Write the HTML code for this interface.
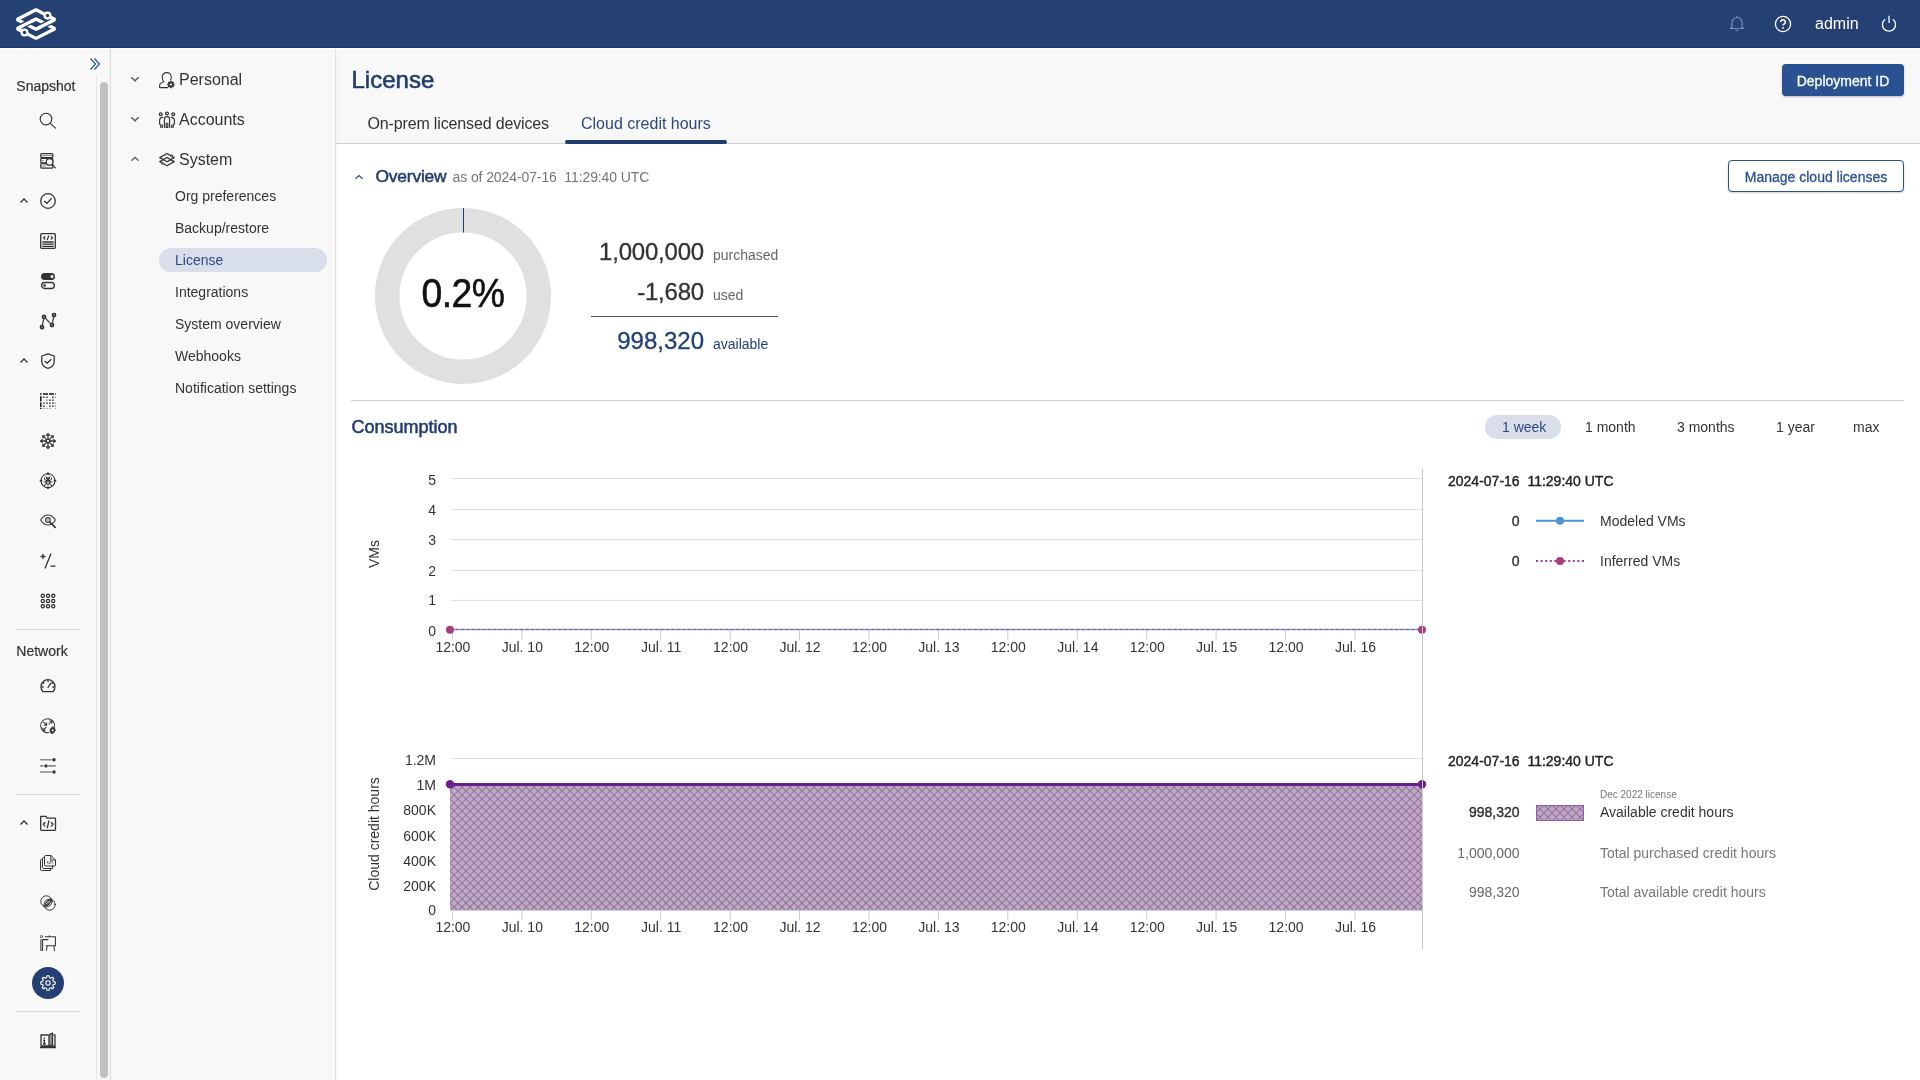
<!DOCTYPE html>
<html><head><meta charset="utf-8">
<style>
*{box-sizing:border-box;margin:0;padding:0}
html,body{width:1920px;height:1080px;overflow:hidden}
body{position:relative;background:#f8f8f8;font-family:"Liberation Sans",sans-serif;color:#333}
.a{position:absolute}
.t{position:absolute;line-height:1;white-space:nowrap}
.m{-webkit-text-stroke:0.35px currentColor}
.r{text-align:right}
#top{left:0;top:0;width:1920px;height:48px;background:#254174;border-bottom:1px solid #1c3563}
#wline{left:0;top:48px;width:1920px;height:1px;background:#fff}
#rail{left:0;top:49px;width:110px;height:1031px;background:#f8f8f8}
#track{left:96px;top:76px;width:14px;height:1004px;border-left:1px solid #e6e6e6}
#thumb{left:100px;top:82px;width:8px;height:996px;border-radius:4px;background:#c1c1c1}
#div1{left:110px;top:49px;width:1px;height:1031px;background:#dedede;box-shadow:-1px 0 2px rgba(0,0,0,0.03)}
#div2{left:335px;top:49px;width:1px;height:1031px;background:#e2e2e2;z-index:2;box-shadow:1px 0 2px rgba(0,0,0,0.04)}
#hdr{left:336px;top:49px;width:1584px;height:95px;background:#f8f8f8;border-bottom:1px solid #cfcfcf}
#main{left:336px;top:144px;width:1584px;height:936px;background:#fff}
.ic{position:absolute;width:16px;height:16px;overflow:visible}
.ic *{fill:none;stroke:#333;stroke-width:1.3;stroke-linecap:round;stroke-linejoin:round}
.navy{color:#1f3b70}
</style></head><body style="will-change:transform">
<div id="top" class="a"></div>
<div id="wline" class="a"></div>
<div id="rail" class="a"></div>
<div id="track" class="a"></div>
<div id="thumb" class="a"></div>
<div id="div1" class="a"></div>
<div id="div2" class="a"></div>
<div id="hdr" class="a"></div>
<div id="main" class="a"></div>

<!-- logo -->
<svg class="a" style="left:0;top:0" width="80" height="48" viewBox="0 0 80 48">
 <g fill="none" stroke="#fff" stroke-width="3.3" stroke-linejoin="bevel">
  <path d="M36 9.8 L55 19.5 L36 29.2 L17 19.5 Z"/>
  <path d="M36 19 L55 28.7 L36 38.4 L17 28.7 Z"/>
 </g>
 <path d="M22 26 L31 21.4" stroke="#254174" stroke-width="6" stroke-linecap="butt"/>
 <path d="M19 27.6 L34 20" stroke="#fff" stroke-width="3.3"/>
 <path d="M50 22 L41 26.6" stroke="#254174" stroke-width="6" stroke-linecap="butt"/>
 <path d="M53 20.5 L38 28.2" stroke="#fff" stroke-width="3.3"/>
 <circle cx="47.5" cy="15.6" r="2.9" fill="#254174" stroke="#fff" stroke-width="2.3"/>
 <circle cx="24.5" cy="32.5" r="2.9" fill="#254174" stroke="#fff" stroke-width="2.3"/>
</svg>

<!-- top right -->
<svg class="a" style="left:1728px;top:14px" width="18" height="19" viewBox="0 0 18 19">
 <path d="M4 13 V8.5 A5 5 0 0 1 14 8.5 V13 L15.5 14.5 H2.5 Z M9 2 V3.5 M7.5 16.5 H10.5" fill="none" stroke="#7f8fae" stroke-width="1.2" stroke-linejoin="round"/>
</svg>
<svg class="a" style="left:1774px;top:15px" width="18" height="18" viewBox="0 0 18 18">
 <circle cx="9" cy="9" r="7.6" fill="none" stroke="#fff" stroke-width="1.3"/>
 <path d="M6.7 7 A2.3 2.3 0 1 1 9.8 9.2 C9.2 9.5 9 9.9 9 10.6" fill="none" stroke="#fff" stroke-width="1.5"/>
 <circle cx="9" cy="12.9" r="0.95" fill="#fff"/>
</svg>
<div class="t" style="left:1815px;top:15.5px;font-size:16px;color:#fff">admin</div>
<svg class="a" style="left:1880px;top:14px" width="18" height="19" viewBox="0 0 18 19">
 <path d="M5.2 5.2 A6.6 6.6 0 1 0 12.8 5.2" fill="none" stroke="#fff" stroke-width="1.3"/>
 <path d="M9 1.8 V9" fill="none" stroke="#fff" stroke-width="1.3"/>
</svg>

<!-- rail -->
<div class="t m" style="left:16.3px;top:78.8px;font-size:14px;color:#333;-webkit-text-stroke:0.2px #333">Snapshot</div>
<svg class="a" style="left:88px;top:56px" width="14" height="16" viewBox="0 0 14 16"><path d="M2.5 2.5 L7.5 8 L2.5 13.5 M6.5 2.5 L11.5 8 L6.5 13.5" fill="none" stroke="#2f5aa0" stroke-width="1.3"/></svg>
<div class="t m" style="left:16.3px;top:643.8px;font-size:14px;color:#333;-webkit-text-stroke:0.2px #333">Network</div>
<div class="a" style="left:16px;top:629px;width:64px;height:1px;background:#d9d9d9"></div>
<div class="a" style="left:16px;top:794px;width:64px;height:1px;background:#d9d9d9"></div>
<div class="a" style="left:16px;top:1011px;width:64px;height:1px;background:#d9d9d9"></div>
<!-- chevrons -->
<svg class="a" style="left:18px;top:195px" width="12" height="12" viewBox="0 0 12 12"><path d="M2.5 7.5 L6 4 L9.5 7.5" fill="none" stroke="#333" stroke-width="1.3"/></svg>
<svg class="a" style="left:18px;top:355px" width="12" height="12" viewBox="0 0 12 12"><path d="M2.5 7.5 L6 4 L9.5 7.5" fill="none" stroke="#333" stroke-width="1.3"/></svg>
<svg class="a" style="left:18px;top:817px" width="12" height="12" viewBox="0 0 12 12"><path d="M2.5 7.5 L6 4 L9.5 7.5" fill="none" stroke="#333" stroke-width="1.3"/></svg>
<!-- 1 search -->
<svg class="ic" style="left:40px;top:113px" viewBox="0 0 16 16"><circle cx="6" cy="6" r="5.8" style="stroke-width:1.15"/><path d="M10.3 10.3 L15.5 15.2" style="stroke-width:1.15"/></svg>
<!-- 2 server search -->
<svg class="ic" style="left:40px;top:153px" viewBox="0 0 16 16"><g style="stroke-width:1.2"><rect x="0.8" y="0.6" width="12" height="4" rx="1"/><rect x="0.8" y="5.3" width="12" height="4.6" rx="1"/><rect x="0.8" y="10.6" width="12" height="4.6" rx="1"/></g><g style="fill:#333;stroke:none"><circle cx="3" cy="2.6" r="0.65" style="fill:#333;stroke:none"/><circle cx="5" cy="2.6" r="0.65" style="fill:#333;stroke:none"/><circle cx="7" cy="2.6" r="0.65" style="fill:#333;stroke:none"/><circle cx="9" cy="2.6" r="0.65" style="fill:#333;stroke:none"/><circle cx="11" cy="2.6" r="0.65" style="fill:#333;stroke:none"/><circle cx="3" cy="7.6" r="0.65" style="fill:#333;stroke:none"/><circle cx="3" cy="12.9" r="0.65" style="fill:#333;stroke:none"/><circle cx="5" cy="12.9" r="0.65" style="fill:#333;stroke:none"/></g><circle cx="9.6" cy="8.9" r="3.3" style="fill:#f8f8f8;stroke-width:1.2"/><path d="M12 11.4 L15.3 14.8" style="stroke-width:1.2"/></svg>
<!-- 3 check circle -->
<svg class="ic" style="left:40px;top:193px" viewBox="0 0 16 16"><circle cx="8" cy="8" r="7.3"/><path d="M4.5 8.3 L7 10.3 L11.3 5.6"/></svg>
<!-- 4 code doc -->
<svg class="ic" style="left:40px;top:233px" viewBox="0 0 16 16"><rect x="0.7" y="0.7" width="14.6" height="14.6" rx="1"/><path d="M4.8 3.6 L3.6 4.8 L4.8 6 M11.2 3.6 L12.4 4.8 L11.2 6 M8.6 3 L7.4 6.6 M2.8 9 H13.2 M2.8 11.2 H13.2 M2.8 13.3 H13.2"/></svg>
<!-- 5 toggles -->
<svg class="ic" style="left:40px;top:273px" viewBox="0 0 16 16"><rect x="1" y="0" width="14" height="7" rx="3.5" style="fill:#333;stroke:none"/><circle cx="12" cy="3.5" r="1.5" style="fill:#f8f8f8;stroke:none"/><rect x="1.6" y="9.5" width="12.8" height="6" rx="3"/><circle cx="4.6" cy="12.5" r="1.3" style="fill:#333;stroke:none"/></svg>
<!-- 6 graph -->
<svg class="ic" style="left:40px;top:313px" viewBox="0 0 16 16"><path d="M2 14.2 L4 3.8 L12 12.1 L14 2" style="stroke:#444"/><circle cx="2" cy="14.2" r="1.7" style="fill:#777"/><circle cx="4" cy="3.8" r="1.7" style="fill:#777"/><circle cx="12" cy="12.1" r="1.7" style="fill:#777"/><circle cx="14" cy="2" r="1.7" style="fill:#777"/></svg>
<!-- 7 shield -->
<svg class="ic" style="left:40px;top:353px" viewBox="0 0 16 16"><path d="M8 0.8 L14.2 3 V8.5 C14.2 12 11 14.5 8 15.4 C5 14.5 1.8 12 1.8 8.5 V3 Z"/><path d="M5 8.5 L7.2 10.3 L11 6.5"/></svg>
<!-- 8 dotted grid -->
<svg class="ic" style="left:40px;top:393px" viewBox="0 0 16 16"><rect x="0" y="0.2" width="1.5" height="1.6" style="fill:#222;stroke:none"/><rect x="3" y="0.2" width="5" height="1.6" style="fill:#222;stroke:none"/><rect x="9" y="0.2" width="5" height="1.6" style="fill:#222;stroke:none"/><rect x="15" y="0.2" width="1" height="1.6" style="fill:#444;stroke:none"/><rect x="0" y="3" width="1.6" height="5.5" rx="0.6" style="fill:#222;stroke:none"/><rect x="0" y="9.3" width="1.6" height="5" rx="0.6" style="fill:#222;stroke:none"/><rect x="0" y="15" width="1.6" height="1" style="fill:#222;stroke:none"/><rect x="3.15" y="3.55" width="1.5" height="1.5" style="fill:#333;stroke:none"/><rect x="6.15" y="3.55" width="1.5" height="1.5" style="fill:#333;stroke:none"/><rect x="12.15" y="3.55" width="1.5" height="1.5" style="fill:#333;stroke:none"/><rect x="14.75" y="3.55" width="1" height="1.5" style="fill:#888;stroke:none"/><rect x="6.15" y="6.45" width="1.5" height="1.5" style="fill:#888;stroke:none"/><rect x="9.15" y="6.45" width="1.5" height="1.5" style="fill:#333;stroke:none"/><rect x="12.15" y="6.45" width="1.5" height="1.5" style="fill:#333;stroke:none"/><rect x="3.15" y="9.45" width="1.5" height="1.5" style="fill:#333;stroke:none"/><rect x="6.15" y="9.45" width="1.5" height="1.5" style="fill:#333;stroke:none"/><rect x="9.15" y="9.45" width="1.5" height="1.5" style="fill:#333;stroke:none"/><rect x="12.15" y="9.45" width="1.5" height="1.5" style="fill:#333;stroke:none"/><rect x="14.75" y="9.45" width="1" height="1.5" style="fill:#888;stroke:none"/><rect x="3.15" y="12.35" width="1.5" height="1.5" style="fill:#333;stroke:none"/><rect x="9.15" y="12.35" width="1.5" height="1.5" style="fill:#333;stroke:none"/><rect x="12.15" y="12.35" width="1.5" height="1.5" style="fill:#333;stroke:none"/><rect x="14.75" y="12.35" width="1" height="1.5" style="fill:#888;stroke:none"/><rect x="3.15" y="14.85" width="1.5" height="1.0" style="fill:#888;stroke:none"/><rect x="6.15" y="14.85" width="1.5" height="1.0" style="fill:#888;stroke:none"/><rect x="9.15" y="14.85" width="1.5" height="1.0" style="fill:#888;stroke:none"/><rect x="14.75" y="14.85" width="1" height="1.0" style="fill:#888;stroke:none"/></svg>
<!-- 9 hub -->
<svg class="ic" style="left:40px;top:433px" viewBox="0 0 16 16"><circle cx="8" cy="8" r="1.8"/><path d="M8 0.8 V6 M8 10 V15.2 M0.8 8 H6 M10 8 H15.2 M2.9 2.9 L6.6 6.6 M9.4 9.4 L13.1 13.1 M13.1 2.9 L9.4 6.6 M6.6 9.4 L2.9 13.1"/><path d="M6.6 2.2 L8 0.8 L9.4 2.2 M6.6 13.8 L8 15.2 L9.4 13.8 M2.2 6.6 L0.8 8 L2.2 9.4 M13.8 6.6 L15.2 8 L13.8 9.4 M2.9 4.8 V2.9 H4.8 M11.2 2.9 H13.1 V4.8 M13.1 11.2 V13.1 H11.2 M4.8 13.1 H2.9 V11.2"/></svg>
<!-- 10 bug circle -->
<svg class="ic" style="left:40px;top:473px" viewBox="0 0 16 16"><circle cx="8" cy="7.7" r="7" style="stroke-width:1.05"/><path d="M8 0.2 V1.2 M8 14.2 V15.2 M0.5 7.7 H1.5 M14.5 7.7 H15.5" style="stroke-width:1.8"/><ellipse cx="8" cy="9" rx="1.9" ry="2.6" style="fill:#333;stroke-width:1"/><path d="M6.6 5.6 A1.5 1.5 0 0 1 9.4 5.6 Z" style="fill:#333;stroke-width:1"/><path d="M6 7.3 L4.5 6.3 L4.5 5 M10 7.3 L11.5 6.3 L11.5 5 M5.9 9 H4 M10.1 9 H12 M6.2 10.8 L4.6 11.8 V12.8 M9.8 10.8 L11.4 11.8 V12.8 M6.7 4.7 L6 3.5 M9.3 4.7 L10 3.5" style="stroke-width:1"/><ellipse cx="8" cy="9.6" rx="0.8" ry="1.3" style="fill:#f8f8f8;stroke:none"/></svg>
<!-- 11 eye search -->
<svg class="ic" style="left:40px;top:513px" viewBox="0 0 16 16"><path d="M0.6 7 C3 3.2 5.5 2 8 2 C10.5 2 13 3.2 15.4 7 C13 10.8 10.5 12 8 12 C5.5 12 3 10.8 0.6 7 Z" style="stroke-width:1.05"/><circle cx="7.9" cy="7" r="2.4" style="fill:#f8f8f8;stroke-width:1.1"/><circle cx="7.9" cy="7" r="1" style="fill:#999;stroke:none"/><path d="M9.7 9 L15.2 14.3" style="stroke-width:1.7"/></svg>
<!-- 12 +/- -->
<svg class="ic" style="left:40px;top:553px" viewBox="0 0 16 16"><path d="M10.8 1 L5.2 15 M1 3.5 H5 M3 1.5 V5.5 M11 13.2 H15"/></svg>
<!-- 13 3x3 -->
<svg class="ic" style="left:40px;top:593px" viewBox="0 0 16 16"><g style="stroke-width:1.4"><circle cx="2.8" cy="2.8" r="1.6"/><circle cx="8" cy="2.8" r="1.6"/><circle cx="13.2" cy="2.8" r="1.6"/><circle cx="2.8" cy="8" r="1.6"/><circle cx="8" cy="8" r="1.6"/><circle cx="13.2" cy="8" r="1.6"/><circle cx="2.8" cy="13.2" r="1.6"/><circle cx="8" cy="13.2" r="1.6"/><circle cx="13.2" cy="13.2" r="1.6"/></g></svg>
<!-- 14 speedometer -->
<svg class="ic" style="left:40px;top:678px" viewBox="0 0 16 16"><path d="M3 13.6 A7 7 0 1 1 13 13.6 Z"/><path d="M8 9.5 L10.8 5.2 M8 2.3 V3.5 M3 4.5 L3.8 5.3 M13 4.5 L12.2 5.3 M2 9 H3.2 M12.8 9 H14"/></svg>
<!-- 15 gauge gear -->
<svg class="ic" style="left:40px;top:718px" viewBox="0 0 16 16"><path d="M8.8 14.6 A7 7 0 1 1 14.6 8.2" style="stroke-width:1.05"/><path d="M3.6 4.2 L6.6 7.2 M6.6 7.2 V5 M6.6 7.2 H4.4 M9 6 L12 3 M12 3 V5.2 M12 3 H9.8 M6 9.3 L3 12.3 M3 12.3 V10.1 M3 12.3 H5.2" style="stroke-width:1.05"/><path d="M12.6 8.6 L13.5 8.6 L13.8 9.6 L14.8 9.2 L15.4 9.9 L14.8 10.8 L15.6 11.6 L16 12.6 L15 13 L15 14 L14.2 14.6 L13.6 15.6 L12.6 15.4 L11.6 16 L10.8 15.2 L10 14.6 L10.2 13.6 L9.4 12.8 L9.8 11.8 L9.8 10.8 L10.8 10.3 L11.4 9.4 Z" style="fill:#333;stroke:none"/><circle cx="12.7" cy="12.3" r="1.1" style="fill:#f8f8f8;stroke:none"/></svg>
<!-- 16 sliders -->
<svg class="ic" style="left:40px;top:758px" viewBox="0 0 16 16"><path d="M0.8 1.7 H11.5 M0.8 7.9 H2.8 M8.8 7.9 H15.2 M0.8 14 H11.5" style="stroke:#888;stroke-width:1.6"/><circle cx="14" cy="1.7" r="1.7" style="fill:#333;stroke:none"/><circle cx="6" cy="7.9" r="1.7" style="fill:#333;stroke:none"/><circle cx="14" cy="14" r="1.7" style="fill:#333;stroke:none"/></svg>
<!-- 17 folder code -->
<svg class="ic" style="left:40px;top:815px" viewBox="0 0 16 16"><path d="M0.7 1.3 V14.5 A0.8 0.8 0 0 0 1.5 15.3 H14.7 A0.8 0.8 0 0 0 15.5 14.5 V3.9 A0.8 0.8 0 0 0 14.7 3.1 H7 L6 1.3 Z"/><path d="M5 7.5 L3.3 9.3 L5 11.1 M11.3 7.5 L13 9.3 L11.3 11.1 M8.8 6 L7.4 12.7"/></svg>
<!-- 18 files code -->
<svg class="ic" style="left:40px;top:855px" viewBox="0 0 16 16"><path d="M4.5 1.5 A1 1 0 0 1 5.5 0.5 H10.8 L15.5 5 V10 A1 1 0 0 1 14.5 11 H5.5 A1 1 0 0 1 4.5 10 Z M10.8 0.5 V5 H15.5" style="stroke-width:1"/><path d="M4.5 2.5 H3.5 A1 1 0 0 0 2.5 3.5 V12.5 A1 1 0 0 0 3.5 13.5 H12.5 V11" style="stroke-width:1"/><path d="M2.5 4.5 H1.5 A1 1 0 0 0 0.5 5.5 V14.5 A1 1 0 0 0 1.5 15.5 H10.5 V13.5" style="stroke-width:1"/><path d="M8 6.3 L7.2 7.3 L8 8.3 M12 6.3 L12.8 7.3 L12 8.3 M10.4 5.9 L9.6 8.8" style="stroke-width:0.9"/></svg>
<!-- 19 overlapping circles -->
<svg class="ic" style="left:40px;top:895px" viewBox="0 0 16 16"><circle cx="6.4" cy="6.4" r="5.6" style="stroke-width:1"/><circle cx="9.6" cy="9.6" r="5.6" style="stroke-width:1"/><path d="M4.3 11.2 C6 7 7 6 11.2 4.3 C10.5 8.6 8.6 10.5 4.3 11.2 Z" style="stroke-width:1.2"/><path d="M6.3 7.3 L8.6 9.3 M7.5 6.2 L9.6 8.1 M5.6 8.8 L7.4 10.2" style="stroke-width:1"/></svg>
<!-- 20 presentation -->
<svg class="ic" style="left:40px;top:935px" viewBox="0 0 16 16"><circle cx="1.5" cy="1.6" r="1.1" style="stroke-width:0.9"/><path d="M0.9 4.6 V15.5 M2.6 4.6 V15.5 M2.6 4.6 H8 M5.4 1.8 H15.4 V10.8 H6.2 M7.2 10.8 L6.4 15.5 M13.8 10.8 L14.6 15.5" style="stroke-width:1.05"/><path d="M9.5 0.8 V1.8" style="stroke-width:1"/></svg>
<!-- 21 settings dark -->
<div class="a" style="left:32px;top:967px;width:32px;height:32px;border-radius:16px;background:#243f72"></div>
<svg class="a" style="left:40px;top:975px" width="16" height="16" viewBox="0 0 16 16"><path d="M6.9 0.8 H9.1 L9.5 2.7 L10.9 3.3 L12.5 2.2 L13.8 3.5 L12.7 5.1 L13.3 6.5 L15.2 6.9 V9.1 L13.3 9.5 L12.7 10.9 L13.8 12.5 L12.5 13.8 L10.9 12.7 L9.5 13.3 L9.1 15.2 H6.9 L6.5 13.3 L5.1 12.7 L3.5 13.8 L2.2 12.5 L3.3 10.9 L2.7 9.5 L0.8 9.1 V6.9 L2.7 6.5 L3.3 5.1 L2.2 3.5 L3.5 2.2 L5.1 3.3 L6.5 2.7 Z" fill="none" stroke="#fff" stroke-width="1.1" stroke-linejoin="round"/><circle cx="8" cy="8" r="2.2" fill="none" stroke="#fff" stroke-width="1.1"/></svg>
<!-- 22 book info -->
<svg class="ic" style="left:40px;top:1032px" viewBox="0 0 16 16"><path d="M8 3 H1 V14 H15 V3 H14 M0.5 15.5 H15.5"/><path d="M9 14 V2.8 L12.5 1 V12.5 L9 14" style="fill:#999;stroke:#333"/><path d="M4.2 6 V6.2 M3.6 8.3 H4.4 V12 M3.4 12 H5.3" style="stroke-width:1.4"/></svg>

<!-- secondary nav -->
<svg class="a" style="left:129px;top:73px" width="12" height="12" viewBox="0 0 12 12"><path d="M2.3 4.3 L6 7.8 L9.7 4.3" fill="none" stroke="#555" stroke-width="1.2"/></svg>
<svg class="a" style="left:129px;top:113px" width="12" height="12" viewBox="0 0 12 12"><path d="M2.3 4.3 L6 7.8 L9.7 4.3" fill="none" stroke="#555" stroke-width="1.2"/></svg>
<svg class="a" style="left:129px;top:153px" width="12" height="12" viewBox="0 0 12 12"><path d="M2.3 7.8 L6 4.3 L9.7 7.8" fill="none" stroke="#555" stroke-width="1.2"/></svg>
<svg class="ic" style="left:159px;top:72px" viewBox="0 0 16 16"><path d="M0.6 15.6 V14 C0.6 11.8 2.2 10.4 5 9.8 C3.8 8.8 3.3 7.4 3.3 5.6 C3.3 2.6 5.2 0.6 7.8 0.6 C10.4 0.6 12.3 2.6 12.3 5.2 C12.3 6.2 12 7.2 11.6 7.8 M0.6 15.6 H8.6" style="stroke-width:1.1"/><path d="M11.2 8.8 H12.6 L12.9 10 L14.1 9.4 L15 10.3 L14.4 11.5 L15.6 11.8 V13.2 L14.4 13.5 L15 14.7 L14.1 15.6 L12.9 15 L12.6 16.2 H11.2 L10.9 15 L9.7 15.6 L8.8 14.7 L9.4 13.5 L8.2 13.2 V11.8 L9.4 11.5 L8.8 10.3 L9.7 9.4 L10.9 10 Z" style="fill:#333;stroke:none"/><circle cx="11.9" cy="12.5" r="1.1" style="fill:#f8f8f8;stroke:none"/></svg>
<svg class="ic" style="left:159px;top:112px" viewBox="0 0 16 16"><g style="fill:#888;stroke-width:0.9"><circle cx="1.8" cy="2.3" r="1.4"/><circle cx="8" cy="1.5" r="1.4"/><circle cx="14.2" cy="2.3" r="1.4"/></g><path d="M5.4 15.5 V7.5 C5.4 5.6 6.4 4.6 8 4.6 C9.6 4.6 10.6 5.6 10.6 7.5 V15.5 M7.2 15.5 V11 M8.8 15.5 V11 M7.2 15.5 H8.8" style="stroke-width:1.15"/><path d="M3.8 5.4 C1.8 5.4 0.6 6.6 0.6 8.6 V12 L1.8 12.8 V15.5 M3.3 13 V15.5 M12.2 5.4 C14.2 5.4 15.4 6.6 15.4 8.6 V12 L14.2 12.8 V15.5 M12.7 13 V15.5" style="stroke-width:1.15"/></svg>
<svg class="ic" style="left:159px;top:152px" viewBox="0 0 16 16"><g style="stroke-width:1.2"><path d="M8 1.5 L15.2 5.6 L8 9.7 L0.8 5.6 Z"/><path d="M8 5.5 L15.2 9.6 L8 13.7 L0.8 9.6 Z"/></g><circle cx="12.6" cy="3.9" r="1" style="fill:#f8f8f8;stroke-width:1"/><circle cx="3.4" cy="11.3" r="1" style="fill:#f8f8f8;stroke-width:1"/></svg>
<div class="t" style="left:179px;top:71.5px;font-size:16px;color:#333">Personal</div>
<div class="t" style="left:179px;top:111.5px;font-size:16px;color:#333">Accounts</div>
<div class="t" style="left:179px;top:151.5px;font-size:16px;color:#333">System</div>
<div class="a" style="left:159px;top:248px;width:168px;height:24px;border-radius:12px;background:#d8dfea"></div>
<div class="t" style="left:175px;top:189px;font-size:14px;color:#333">Org preferences</div>
<div class="t" style="left:175px;top:221px;font-size:14px;color:#333">Backup/restore</div>
<div class="t" style="left:175px;top:253px;font-size:14px;color:#2b4a82">License</div>
<div class="t" style="left:175px;top:285px;font-size:14px;color:#333">Integrations</div>
<div class="t" style="left:175px;top:317px;font-size:14px;color:#333">System overview</div>
<div class="t" style="left:175px;top:349px;font-size:14px;color:#333">Webhooks</div>
<div class="t" style="left:175px;top:381px;font-size:14px;color:#333">Notification settings</div>

<!-- page header -->
<div class="t" style="left:351.5px;top:67.8px;font-size:24px;color:#1f3b70;-webkit-text-stroke:0.55px #1f3b70">License</div>
<div class="a" style="left:1782px;top:64px;width:122px;height:32px;border-radius:4px;background:#2a5192;box-shadow:0 1px 2px rgba(0,0,0,.25)"></div>
<div class="t m" style="left:1782px;top:74px;width:122px;text-align:center;font-size:14px;color:#fff;-webkit-text-stroke:0.3px #fff">Deployment ID</div>
<div class="t" style="left:367.5px;top:116.3px;font-size:16px;color:#333;letter-spacing:-0.15px">On-prem licensed devices</div>
<div class="t" style="left:581px;top:116.3px;font-size:16px;color:#2b4a82">Cloud credit hours</div>
<div class="a" style="left:565px;top:140px;width:162px;height:4px;border-radius:2px;background:#1f3b70"></div>

<!-- overview -->
<svg class="a" style="left:352px;top:170px" width="14" height="14" viewBox="0 0 14 14"><path d="M3.5 8.7 L7 5.5 L10.5 8.7" fill="none" stroke="#2b4a82" stroke-width="1.2"/></svg>
<div class="t" style="left:375.5px;top:168px;font-size:17.4px;color:#1f3b70;-webkit-text-stroke:0.5px #1f3b70;letter-spacing:-0.2px">Overview</div>
<div class="t" style="left:452.5px;top:169.6px;font-size:14px;color:#757575;letter-spacing:-0.1px">as of 2024-07-16&nbsp; 11:29:40 UTC</div>
<div class="a" style="left:1728px;top:160px;width:176px;height:32px;border-radius:4px;background:#fff;border:1px solid #2a5192;box-shadow:0 1px 2px rgba(0,0,0,.2)"></div>
<div class="t m" style="left:1728px;top:170px;width:176px;text-align:center;font-size:14px;color:#2a5192;-webkit-text-stroke:0.3px #2a5192">Manage cloud licenses</div>
<svg class="a" style="left:370px;top:203px" width="186" height="186" viewBox="0 0 186 186">
 <circle cx="93" cy="93" r="75.8" fill="none" stroke="#e0e0e0" stroke-width="24.5"/>
 <path d="M93.5 5 V29.5" stroke="#1f3b70" stroke-width="1"/>
</svg>
<div class="t" style="left:413px;top:273px;width:100px;text-align:center;font-size:40px;color:#111;letter-spacing:-0.6px;transform:scaleX(0.935);-webkit-text-stroke:0.55px #111">0.2%</div>
<div class="t r" style="left:504px;top:239.5px;width:200px;font-size:24px;color:#333;letter-spacing:-0.2px;-webkit-text-stroke:0.3px #333">1,000,000</div>
<div class="t" style="left:713px;top:248px;font-size:14px;color:#666">purchased</div>
<div class="t r" style="left:504px;top:279.5px;width:200px;font-size:24px;color:#333;letter-spacing:-0.2px;-webkit-text-stroke:0.3px #333">-1,680</div>
<div class="t" style="left:713px;top:288px;font-size:14px;color:#666">used</div>
<div class="a" style="left:591px;top:316px;width:187px;height:1px;background:#555"></div>
<div class="t r" style="left:504px;top:328.5px;width:200px;font-size:24px;color:#1f3f7a;letter-spacing:0px;-webkit-text-stroke:0.3px #1f3f7a">998,320</div>
<div class="t" style="left:713px;top:337px;font-size:14px;color:#1f3f7a">available</div>
<div class="a" style="left:351px;top:400px;width:1553px;height:1px;background:#d0d0d0"></div>
<div class="t" style="left:351.5px;top:417.6px;font-size:18px;color:#1f3b70;-webkit-text-stroke:0.5px #1f3b70">Consumption</div>
<div class="a" style="left:1485px;top:415px;width:76px;height:24px;border-radius:12px;background:#d8dfea"></div>
<div class="t" style="left:1502px;top:420px;font-size:14px;color:#2b4a82">1 week</div>
<div class="t" style="left:1585px;top:420px;font-size:14px;color:#333">1 month</div>
<div class="t" style="left:1677px;top:420px;font-size:14px;color:#333">3 months</div>
<div class="t" style="left:1776px;top:420px;font-size:14px;color:#333">1 year</div>
<div class="t" style="left:1853px;top:420px;font-size:14px;color:#333">max</div>

<!-- charts -->
<svg class="a" style="left:0;top:0" width="1920" height="1080" viewBox="0 0 1920 1080" font-family="Liberation Sans, sans-serif">
<defs><clipPath id="c1"><rect x="450" y="785" width="972" height="125"/></clipPath><clipPath id="c2"><rect x="1537" y="806" width="46" height="14"/></clipPath></defs>
<path d="M451 478.5 H1422" stroke="#dcdcdc" stroke-width="1"/>
<path d="M451 509.4 H1422" stroke="#dcdcdc" stroke-width="1"/>
<path d="M451 539.6 H1422" stroke="#dcdcdc" stroke-width="1"/>
<path d="M451 570.6 H1422" stroke="#dcdcdc" stroke-width="1"/>
<path d="M451 600.4 H1422" stroke="#dcdcdc" stroke-width="1"/>
<text x="436" y="485" font-size="14" fill="#333" text-anchor="end">5</text>
<text x="436" y="514.6" font-size="14" fill="#333" text-anchor="end">4</text>
<text x="436" y="544.6" font-size="14" fill="#333" text-anchor="end">3</text>
<text x="436" y="575.7" font-size="14" fill="#333" text-anchor="end">2</text>
<text x="436" y="605.4" font-size="14" fill="#333" text-anchor="end">1</text>
<text x="436" y="635.6" font-size="14" fill="#333" text-anchor="end">0</text>
<path d="M452.4 630 V640" stroke="#c5cbeb" stroke-width="1"/>
<text x="452.9" y="651.9" font-size="14" fill="#333" text-anchor="middle">12:00</text>
<path d="M521.8 630 V640" stroke="#c5cbeb" stroke-width="1"/>
<text x="522.3" y="651.9" font-size="14" fill="#333" text-anchor="middle">Jul. 10</text>
<path d="M591.3 630 V640" stroke="#c5cbeb" stroke-width="1"/>
<text x="591.8" y="651.9" font-size="14" fill="#333" text-anchor="middle">12:00</text>
<path d="M660.7 630 V640" stroke="#c5cbeb" stroke-width="1"/>
<text x="661.2" y="651.9" font-size="14" fill="#333" text-anchor="middle">Jul. 11</text>
<path d="M730.1 630 V640" stroke="#c5cbeb" stroke-width="1"/>
<text x="730.6" y="651.9" font-size="14" fill="#333" text-anchor="middle">12:00</text>
<path d="M799.5 630 V640" stroke="#c5cbeb" stroke-width="1"/>
<text x="800.0" y="651.9" font-size="14" fill="#333" text-anchor="middle">Jul. 12</text>
<path d="M869.0 630 V640" stroke="#c5cbeb" stroke-width="1"/>
<text x="869.5" y="651.9" font-size="14" fill="#333" text-anchor="middle">12:00</text>
<path d="M938.4 630 V640" stroke="#c5cbeb" stroke-width="1"/>
<text x="938.9" y="651.9" font-size="14" fill="#333" text-anchor="middle">Jul. 13</text>
<path d="M1007.8 630 V640" stroke="#c5cbeb" stroke-width="1"/>
<text x="1008.3" y="651.9" font-size="14" fill="#333" text-anchor="middle">12:00</text>
<path d="M1077.3 630 V640" stroke="#c5cbeb" stroke-width="1"/>
<text x="1077.8" y="651.9" font-size="14" fill="#333" text-anchor="middle">Jul. 14</text>
<path d="M1146.7 630 V640" stroke="#c5cbeb" stroke-width="1"/>
<text x="1147.2" y="651.9" font-size="14" fill="#333" text-anchor="middle">12:00</text>
<path d="M1216.1 630 V640" stroke="#c5cbeb" stroke-width="1"/>
<text x="1216.6" y="651.9" font-size="14" fill="#333" text-anchor="middle">Jul. 15</text>
<path d="M1285.6 630 V640" stroke="#c5cbeb" stroke-width="1"/>
<text x="1286.1" y="651.9" font-size="14" fill="#333" text-anchor="middle">12:00</text>
<path d="M1355.0 630 V640" stroke="#c5cbeb" stroke-width="1"/>
<text x="1355.5" y="651.9" font-size="14" fill="#333" text-anchor="middle">Jul. 16</text>
<path d="M450 629.5 H1422" stroke="#6aa6dc" stroke-width="1.6"/>
<path d="M450 629.5 H1422" stroke="#b03f84" stroke-width="1.1" stroke-dasharray="3 2.4"/>
<circle cx="450" cy="629.7" r="4" fill="#a63d7f"/>
<circle cx="1422" cy="629.7" r="4" fill="#a63d7f"/>
<text transform="translate(378.5 554) rotate(-90)" font-size="14" fill="#333" text-anchor="middle">VMs</text>
<path d="M451 758.6 H1422" stroke="#dcdcdc" stroke-width="1"/>
<path d="M451 784 H1422" stroke="#dcdcdc" stroke-width="1"/>
<path d="M451 809.4 H1422" stroke="#dcdcdc" stroke-width="1"/>
<path d="M451 835.2 H1422" stroke="#dcdcdc" stroke-width="1"/>
<path d="M451 860.3 H1422" stroke="#dcdcdc" stroke-width="1"/>
<path d="M451 885.6 H1422" stroke="#dcdcdc" stroke-width="1"/>
<rect x="450" y="784" width="972" height="126" fill="#c3a6d7"/>
<path d="M450 809.4 H1422" stroke="#b99dd0" stroke-width="1"/>
<path d="M450 835.2 H1422" stroke="#b99dd0" stroke-width="1"/>
<path d="M450 860.3 H1422" stroke="#b99dd0" stroke-width="1"/>
<path d="M450 885.6 H1422" stroke="#b99dd0" stroke-width="1"/>
<path clip-path="url(#c1)" d="M323 784L449 910M331 784L457 910M339 784L465 910M347 784L473 910M355 784L481 910M363 784L489 910M371 784L497 910M379 784L505 910M387 784L513 910M395 784L521 910M403 784L529 910M411 784L537 910M419 784L545 910M427 784L553 910M435 784L561 910M443 784L569 910M451 784L577 910M459 784L585 910M467 784L593 910M475 784L601 910M483 784L609 910M491 784L617 910M499 784L625 910M507 784L633 910M515 784L641 910M523 784L649 910M531 784L657 910M539 784L665 910M547 784L673 910M555 784L681 910M563 784L689 910M571 784L697 910M579 784L705 910M587 784L713 910M595 784L721 910M603 784L729 910M611 784L737 910M619 784L745 910M627 784L753 910M635 784L761 910M643 784L769 910M651 784L777 910M659 784L785 910M667 784L793 910M675 784L801 910M683 784L809 910M691 784L817 910M699 784L825 910M707 784L833 910M715 784L841 910M723 784L849 910M731 784L857 910M739 784L865 910M747 784L873 910M755 784L881 910M763 784L889 910M771 784L897 910M779 784L905 910M787 784L913 910M795 784L921 910M803 784L929 910M811 784L937 910M819 784L945 910M827 784L953 910M835 784L961 910M843 784L969 910M851 784L977 910M859 784L985 910M867 784L993 910M875 784L1001 910M883 784L1009 910M891 784L1017 910M899 784L1025 910M907 784L1033 910M915 784L1041 910M923 784L1049 910M931 784L1057 910M939 784L1065 910M947 784L1073 910M955 784L1081 910M963 784L1089 910M971 784L1097 910M979 784L1105 910M987 784L1113 910M995 784L1121 910M1003 784L1129 910M1011 784L1137 910M1019 784L1145 910M1027 784L1153 910M1035 784L1161 910M1043 784L1169 910M1051 784L1177 910M1059 784L1185 910M1067 784L1193 910M1075 784L1201 910M1083 784L1209 910M1091 784L1217 910M1099 784L1225 910M1107 784L1233 910M1115 784L1241 910M1123 784L1249 910M1131 784L1257 910M1139 784L1265 910M1147 784L1273 910M1155 784L1281 910M1163 784L1289 910M1171 784L1297 910M1179 784L1305 910M1187 784L1313 910M1195 784L1321 910M1203 784L1329 910M1211 784L1337 910M1219 784L1345 910M1227 784L1353 910M1235 784L1361 910M1243 784L1369 910M1251 784L1377 910M1259 784L1385 910M1267 784L1393 910M1275 784L1401 910M1283 784L1409 910M1291 784L1417 910M1299 784L1425 910M1307 784L1433 910M1315 784L1441 910M1323 784L1449 910M1331 784L1457 910M1339 784L1465 910M1347 784L1473 910M1355 784L1481 910M1363 784L1489 910M1371 784L1497 910M1379 784L1505 910M1387 784L1513 910M1395 784L1521 910M1403 784L1529 910M1411 784L1537 910M1419 784L1545 910M1427 784L1553 910" stroke="#8d7c7e" stroke-width="1.1" fill="none"/>
<path clip-path="url(#c1)" d="M449 784L323 910M457 784L331 910M465 784L339 910M473 784L347 910M481 784L355 910M489 784L363 910M497 784L371 910M505 784L379 910M513 784L387 910M521 784L395 910M529 784L403 910M537 784L411 910M545 784L419 910M553 784L427 910M561 784L435 910M569 784L443 910M577 784L451 910M585 784L459 910M593 784L467 910M601 784L475 910M609 784L483 910M617 784L491 910M625 784L499 910M633 784L507 910M641 784L515 910M649 784L523 910M657 784L531 910M665 784L539 910M673 784L547 910M681 784L555 910M689 784L563 910M697 784L571 910M705 784L579 910M713 784L587 910M721 784L595 910M729 784L603 910M737 784L611 910M745 784L619 910M753 784L627 910M761 784L635 910M769 784L643 910M777 784L651 910M785 784L659 910M793 784L667 910M801 784L675 910M809 784L683 910M817 784L691 910M825 784L699 910M833 784L707 910M841 784L715 910M849 784L723 910M857 784L731 910M865 784L739 910M873 784L747 910M881 784L755 910M889 784L763 910M897 784L771 910M905 784L779 910M913 784L787 910M921 784L795 910M929 784L803 910M937 784L811 910M945 784L819 910M953 784L827 910M961 784L835 910M969 784L843 910M977 784L851 910M985 784L859 910M993 784L867 910M1001 784L875 910M1009 784L883 910M1017 784L891 910M1025 784L899 910M1033 784L907 910M1041 784L915 910M1049 784L923 910M1057 784L931 910M1065 784L939 910M1073 784L947 910M1081 784L955 910M1089 784L963 910M1097 784L971 910M1105 784L979 910M1113 784L987 910M1121 784L995 910M1129 784L1003 910M1137 784L1011 910M1145 784L1019 910M1153 784L1027 910M1161 784L1035 910M1169 784L1043 910M1177 784L1051 910M1185 784L1059 910M1193 784L1067 910M1201 784L1075 910M1209 784L1083 910M1217 784L1091 910M1225 784L1099 910M1233 784L1107 910M1241 784L1115 910M1249 784L1123 910M1257 784L1131 910M1265 784L1139 910M1273 784L1147 910M1281 784L1155 910M1289 784L1163 910M1297 784L1171 910M1305 784L1179 910M1313 784L1187 910M1321 784L1195 910M1329 784L1203 910M1337 784L1211 910M1345 784L1219 910M1353 784L1227 910M1361 784L1235 910M1369 784L1243 910M1377 784L1251 910M1385 784L1259 910M1393 784L1267 910M1401 784L1275 910M1409 784L1283 910M1417 784L1291 910M1425 784L1299 910M1433 784L1307 910M1441 784L1315 910M1449 784L1323 910M1457 784L1331 910M1465 784L1339 910M1473 784L1347 910M1481 784L1355 910M1489 784L1363 910M1497 784L1371 910M1505 784L1379 910M1513 784L1387 910M1521 784L1395 910M1529 784L1403 910M1537 784L1411 910M1545 784L1419 910M1553 784L1427 910" stroke="#8d7c7e" stroke-width="1.1" fill="none"/>
<path d="M450 910.5 H1422" stroke="#c8cdee" stroke-width="1"/>
<text x="436" y="765" font-size="14" fill="#333" text-anchor="end">1.2M</text>
<text x="436" y="789.8" font-size="14" fill="#333" text-anchor="end">1M</text>
<text x="436" y="814.6" font-size="14" fill="#333" text-anchor="end">800K</text>
<text x="436" y="840.6" font-size="14" fill="#333" text-anchor="end">600K</text>
<text x="436" y="865.6" font-size="14" fill="#333" text-anchor="end">400K</text>
<text x="436" y="890.6" font-size="14" fill="#333" text-anchor="end">200K</text>
<text x="436" y="915.2" font-size="14" fill="#333" text-anchor="end">0</text>
<path d="M452.4 911 V920" stroke="#c5cbeb" stroke-width="1"/>
<text x="452.9" y="931.7" font-size="14" fill="#333" text-anchor="middle">12:00</text>
<path d="M521.8 911 V920" stroke="#c5cbeb" stroke-width="1"/>
<text x="522.3" y="931.7" font-size="14" fill="#333" text-anchor="middle">Jul. 10</text>
<path d="M591.3 911 V920" stroke="#c5cbeb" stroke-width="1"/>
<text x="591.8" y="931.7" font-size="14" fill="#333" text-anchor="middle">12:00</text>
<path d="M660.7 911 V920" stroke="#c5cbeb" stroke-width="1"/>
<text x="661.2" y="931.7" font-size="14" fill="#333" text-anchor="middle">Jul. 11</text>
<path d="M730.1 911 V920" stroke="#c5cbeb" stroke-width="1"/>
<text x="730.6" y="931.7" font-size="14" fill="#333" text-anchor="middle">12:00</text>
<path d="M799.5 911 V920" stroke="#c5cbeb" stroke-width="1"/>
<text x="800.0" y="931.7" font-size="14" fill="#333" text-anchor="middle">Jul. 12</text>
<path d="M869.0 911 V920" stroke="#c5cbeb" stroke-width="1"/>
<text x="869.5" y="931.7" font-size="14" fill="#333" text-anchor="middle">12:00</text>
<path d="M938.4 911 V920" stroke="#c5cbeb" stroke-width="1"/>
<text x="938.9" y="931.7" font-size="14" fill="#333" text-anchor="middle">Jul. 13</text>
<path d="M1007.8 911 V920" stroke="#c5cbeb" stroke-width="1"/>
<text x="1008.3" y="931.7" font-size="14" fill="#333" text-anchor="middle">12:00</text>
<path d="M1077.3 911 V920" stroke="#c5cbeb" stroke-width="1"/>
<text x="1077.8" y="931.7" font-size="14" fill="#333" text-anchor="middle">Jul. 14</text>
<path d="M1146.7 911 V920" stroke="#c5cbeb" stroke-width="1"/>
<text x="1147.2" y="931.7" font-size="14" fill="#333" text-anchor="middle">12:00</text>
<path d="M1216.1 911 V920" stroke="#c5cbeb" stroke-width="1"/>
<text x="1216.6" y="931.7" font-size="14" fill="#333" text-anchor="middle">Jul. 15</text>
<path d="M1285.6 911 V920" stroke="#c5cbeb" stroke-width="1"/>
<text x="1286.1" y="931.7" font-size="14" fill="#333" text-anchor="middle">12:00</text>
<path d="M1355.0 911 V920" stroke="#c5cbeb" stroke-width="1"/>
<text x="1355.5" y="931.7" font-size="14" fill="#333" text-anchor="middle">Jul. 16</text>
<path d="M450 784.4 H1422" stroke="#6a1f8e" stroke-width="3"/>
<circle cx="450" cy="784.2" r="4.2" fill="#6a1f8e"/>
<circle cx="1422" cy="784.2" r="4.2" fill="#6a1f8e"/>
<text transform="translate(378.5 834) rotate(-90)" font-size="14" fill="#333" text-anchor="middle">Cloud credit hours</text>
<path d="M1422.5 469 V949" stroke="#c8c8c8" stroke-width="1"/>
<text x="1448" y="486" font-size="14" fill="#222" stroke="#222" stroke-width="0.4">2024-07-16&#160; 11:29:40 UTC</text>
<text x="1519.5" y="526" font-size="14" fill="#333" stroke="#333" stroke-width="0.4" text-anchor="end">0</text>
<path d="M1536 520.8 H1584" stroke="#4f94d2" stroke-width="2"/>
<circle cx="1560" cy="520.8" r="4" fill="#4f94d2"/>
<text x="1600" y="526" font-size="14" fill="#333">Modeled VMs</text>
<text x="1519.5" y="566" font-size="14" fill="#333" stroke="#333" stroke-width="0.4" text-anchor="end">0</text>
<path d="M1536 560.9 H1584" stroke="#a83c80" stroke-width="2" stroke-dasharray="2 2.6"/>
<circle cx="1560" cy="560.9" r="4" fill="#a83c80"/>
<text x="1600" y="566" font-size="14" fill="#333">Inferred VMs</text>
<text x="1448" y="765.6" font-size="14" fill="#222" stroke="#222" stroke-width="0.4">2024-07-16&#160; 11:29:40 UTC</text>
<text x="1600" y="798" font-size="10" fill="#777">Dec 2022 license</text>
<text x="1519.5" y="817.2" font-size="14" fill="#333" stroke="#333" stroke-width="0.4" text-anchor="end">998,320</text>
<rect x="1536.5" y="805.5" width="47" height="15" fill="#c3a6d7"/>
<path clip-path="url(#c2)" d="M1512 805L1528 821M1520 805L1536 821M1528 805L1544 821M1536 805L1552 821M1544 805L1560 821M1552 805L1568 821M1560 805L1576 821M1568 805L1584 821M1576 805L1592 821M1584 805L1600 821M1592 805L1608 821" stroke="#8d7c7e" stroke-width="1.1" fill="none"/>
<path clip-path="url(#c2)" d="M1528 805L1512 821M1536 805L1520 821M1544 805L1528 821M1552 805L1536 821M1560 805L1544 821M1568 805L1552 821M1576 805L1560 821M1584 805L1568 821M1592 805L1576 821M1600 805L1584 821M1608 805L1592 821" stroke="#8d7c7e" stroke-width="1.1" fill="none"/>
<rect x="1536.5" y="805.5" width="47" height="15" fill="none" stroke="#9159b0" stroke-width="1"/>
<text x="1600" y="817.2" font-size="14" fill="#333">Available credit hours</text>
<text x="1519.5" y="857.5" font-size="14" fill="#666" text-anchor="end">1,000,000</text>
<text x="1600" y="857.5" font-size="14" fill="#777">Total purchased credit hours</text>
<text x="1519.5" y="897.3" font-size="14" fill="#666" text-anchor="end">998,320</text>
<text x="1600" y="897.3" font-size="14" fill="#777">Total available credit hours</text>
</svg>
</body></html>
